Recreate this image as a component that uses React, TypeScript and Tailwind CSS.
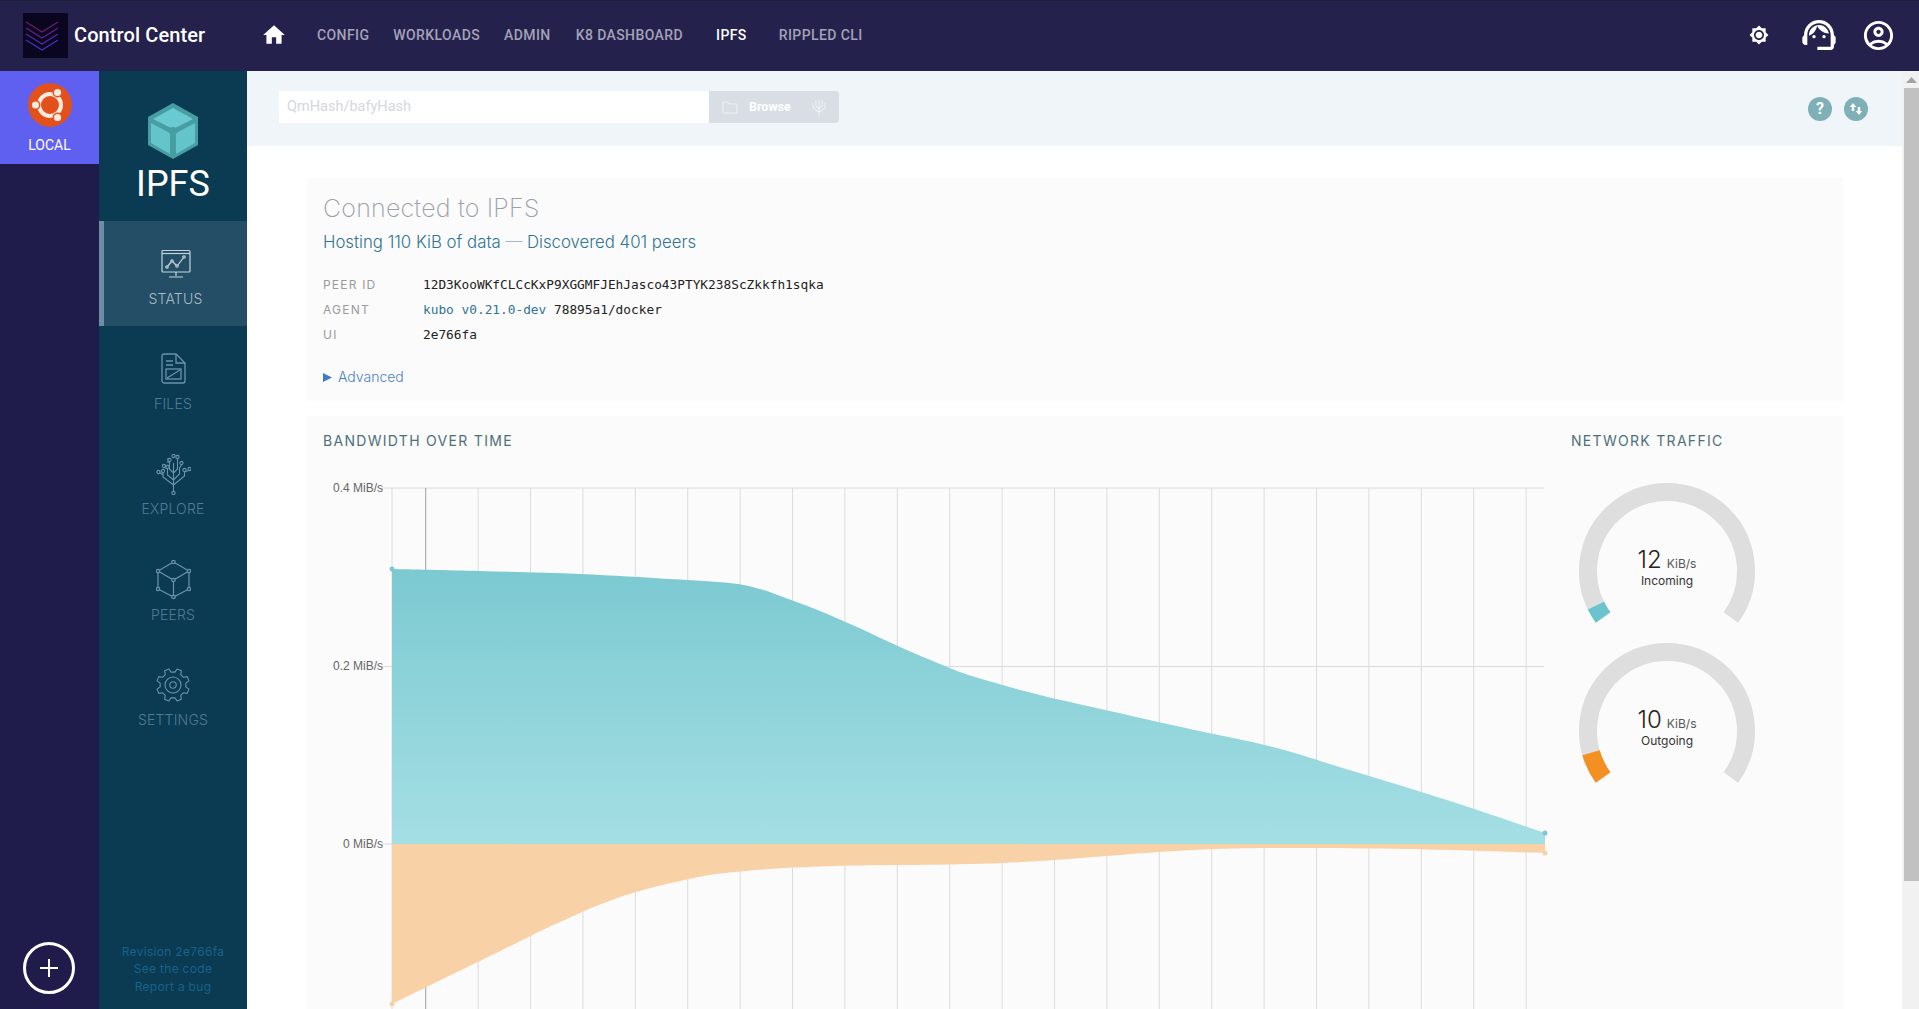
import React from "react";
import { MdHome, MdBrightnessHigh, MdOutlineSupportAgent, MdOutlineAccountCircle } from "react-icons/md";

type Pt = [number, number];

const topLine: Pt[] = [
  [392, 569], [480, 571], [580, 574], [670, 579], [730, 583], [760, 589], [783, 597], [820, 611], [857, 627],
  [900, 647], [940, 664], [975, 677], [1040, 695], [1101, 709], [1190, 729], [1273, 747], [1346, 769], [1450, 801], [1545, 833],
];
const bottomLine: Pt[] = [
  [392, 1004], [490, 956], [560, 922], [620, 897], [680, 881], [734, 872], [832, 866], [1004, 863],
  [1175, 851], [1273, 848], [1407, 849], [1545, 853],
];

// catmull-rom through the samples, same look as the chart's tension curve
const curve = (pts: Pt[]) => {
  let d = `L${pts[0][0]} ${pts[0][1]}`;
  for (let i = 0; i < pts.length - 1; i++) {
    const p0 = pts[Math.max(i - 1, 0)];
    const p1 = pts[i];
    const p2 = pts[i + 1];
    const p3 = pts[Math.min(i + 2, pts.length - 1)];
    const c1x = p1[0] + (p2[0] - p0[0]) / 6;
    const c1y = p1[1] + (p2[1] - p0[1]) / 6;
    const c2x = p2[0] - (p3[0] - p1[0]) / 6;
    const c2y = p2[1] - (p3[1] - p1[1]) / 6;
    d += ` C${c1x} ${c1y} ${c2x} ${c2y} ${p2[0]} ${p2[1]}`;
  }
  return d;
};

const gridX = Array.from({ length: 22 }, (_, i) => 425.7 + i * 52.4);

// angle is measured from straight down, clockwise positive goes to the left side
const polar = (cx: number, cy: number, r: number, deg: number): Pt => {
  const a = (deg * Math.PI) / 180;
  return [cx - r * Math.sin(a), cy + r * Math.cos(a)];
};

const arc = (cx: number, cy: number, r: number, from: number, to: number) => {
  const [x1, y1] = polar(cx, cy, r, from);
  const [x2, y2] = polar(cx, cy, r, to);
  const large = to - from > 180 ? 1 : 0;
  return `M${x1} ${y1} A${r} ${r} 0 ${large} 1 ${x2} ${y2}`;
};

const gearPath = () => {
  const pts: string[] = [];
  for (let i = 0; i < 8; i++) {
    const base = i * 45 + 22.5;
    [[-14, 13], [-8, 16.5], [8, 16.5], [14, 13]].forEach(([off, r]) => {
      const [x, y] = polar(18, 18, r, base + off);
      pts.push(`${x.toFixed(2)},${y.toFixed(2)}`);
    });
  }
  return pts.join(" ");
};

const Gauge = ({ value, label, color, span }: { value: string; label: string; color: string; span: number }) => (
  <svg width="192" height="160" viewBox="0 0 192 160" className="block">
    <path d={arc(96, 88, 79, 54, 306)} fill="none" stroke="#dedede" strokeWidth="18" />
    <path d={arc(96, 88, 79, 54, 54 + span)} fill="none" stroke={color} strokeWidth="18" />
    <text x="96" y="85" textAnchor="middle" fill="#222" fontFamily="Inter, sans-serif">
      <tspan fontSize="24" fontWeight="300">{value}</tspan>
      <tspan fontSize="12" dx="5" fill="#555">KiB/s</tspan>
    </text>
    <text x="96" y="102" textAnchor="middle" fontSize="12" fill="#333" fontFamily="Inter, sans-serif">
      {label}
    </text>
  </svg>
);

const StatusIcon = () => (
  <svg width="30" height="30" viewBox="0 0 30 30" fill="none" stroke="#c4d4de" strokeWidth="1.2">
    <rect x="1" y="1.5" width="28" height="21.5" rx="1" />
    <path d="M1 4.5h28" />
    <path d="M6 18l5-6 5 5 7-9" />
    <circle cx="6" cy="18" r="1.2" fill="#244e66" />
    <circle cx="11" cy="12" r="1.2" fill="#244e66" />
    <circle cx="16" cy="17" r="1.2" fill="#244e66" />
    <circle cx="23" cy="8" r="1.2" fill="#244e66" />
    <path d="M15 23v4M8 28h14" />
  </svg>
);

const FilesIcon = () => (
  <svg width="25" height="31" viewBox="0 0 25 31" fill="none" stroke="#6d94a9" strokeWidth="1.3">
    <path d="M3 1h12l9 9v18a2 2 0 0 1-2 2H3a2 2 0 0 1-2-2V3a2 2 0 0 1 2-2z" />
    <path d="M15 1v9h9M5 8h7M5 12h7" />
    <rect x="5" y="16" width="15" height="10" />
    <path d="M6 25l13-8" />
  </svg>
);

const ExploreIcon = () => (
  <svg width="35" height="41" viewBox="0 0 35 41" fill="none" stroke="#6d94a9" strokeWidth="1.1">
    <path d="M17.5 37V9M17.5 31L7 23V19M17.5 31l11-9v-4l5-2M17.5 26l-6-5v-6l-3-2M17.5 26l6-6v-6l2-3M17.5 19l-4-4V8M17.5 19l4-4V5M3 18l4 3M12 4v5" />
    {[[17.5, 39], [2.5, 18], [7, 17], [8, 12], [11.5, 13], [13.5, 6], [17.5, 2], [21.5, 3], [25.5, 9], [28.5, 16], [33.5, 15]].map(([x, y]) => (
      <circle key={`${x}-${y}`} cx={x} cy={y} r="1.6" fill="#0b3a53" />
    ))}
  </svg>
);

const PeersIcon = () => (
  <svg width="35" height="39" viewBox="0 0 35 39" fill="none" stroke="#6d94a9" strokeWidth="1.2">
    <path d="M17.5 2L33 11v18l-15.5 8L2 29V11zM2 11l15.5 9L33 11M17.5 20v17" />
    {[[17.5, 2], [33, 11], [33, 29], [17.5, 37], [2, 29], [2, 11], [17.5, 20]].map(([x, y]) => (
      <circle key={`${x}-${y}`} cx={x} cy={y} r="1.7" fill="#0b3a53" />
    ))}
  </svg>
);

const SettingsIcon = () => (
  <svg width="36" height="36" viewBox="0 0 36 36" fill="none" stroke="#6d94a9" strokeWidth="1.1" strokeLinejoin="round">
    <polygon points={gearPath()} />
    <circle cx="18" cy="18" r="8" />
    <circle cx="18" cy="18" r="3.2" />
  </svg>
);

const navItems = [
  { label: "FILES", icon: <FilesIcon /> },
  { label: "EXPLORE", icon: <ExploreIcon /> },
  { label: "PEERS", icon: <PeersIcon /> },
  { label: "SETTINGS", icon: <SettingsIcon /> },
];

const App = () => {
  return (
    <div className="h-[1009px] w-full overflow-hidden flex flex-col bg-white font-['Roboto',sans-serif]">
      <header className="h-[71px] shrink-0 bg-[#25214d] border-t border-t-[#1d2033] flex items-center pb-[2px]">
        <div className="w-[45px] h-[45px] ml-[23px] bg-[#0a0620]">
          <svg width="45" height="45" viewBox="0 0 45 45" fill="none" strokeWidth="1.3">
            <path d="M3 9l16 10 16-10" stroke="#6d1d6b" />
            <path d="M3 15l16 10 16-10" stroke="#6a2090" />
            <path d="M3 21l16 10 16-10" stroke="#5a28ac" />
            <path d="M3 27l16 10 16-10" stroke="#4a30c4" />
          </svg>
        </div>
        <div className="ml-[6px] text-white text-[20px] font-medium w-[131px] whitespace-nowrap tracking-[0.1px]">Control Center</div>
        <MdHome className="ml-[56px] text-white" size={26} />
        <nav className="ml-[30px] flex items-center text-[14px] font-medium tracking-[0.4px] text-[#a3a2b8]">
          <span>CONFIG</span>
          <span className="ml-[24px]">WORKLOADS</span>
          <span className="ml-[24px]">ADMIN</span>
          <span className="ml-[25px]">K8 DASHBOARD</span>
          <span className="ml-[33px] text-white">IPFS</span>
          <span className="ml-[32px]">RIPPLED CLI</span>
        </nav>
        <div className="ml-auto flex items-center text-white">
          <MdBrightnessHigh size={20} />
          <MdOutlineSupportAgent className="ml-[30px]" size={40} />
          <MdOutlineAccountCircle className="ml-[22px] mr-[23px]" size={35} />
        </div>
      </header>

      <div className="flex-1 flex min-h-0">
        <aside className="w-[99px] shrink-0 bg-[#1f1b4b] flex flex-col items-stretch">
          <div className="h-[93px] bg-[#6060f0] flex flex-col items-center pt-[12px]">
            <svg width="44" height="44" viewBox="0 0 44 44">
              <circle cx="22" cy="22" r="22" fill="#e2501c" />
              <circle cx="22" cy="22" r="11" fill="none" stroke="#fbeadf" strokeWidth="4" />
              <circle cx="7.5" cy="22" r="5" fill="#e2501c" />
              <circle cx="29.5" cy="9.5" r="5" fill="#e2501c" />
              <circle cx="29.5" cy="34.5" r="5" fill="#e2501c" />
              <circle cx="7.5" cy="22" r="3.6" fill="#fbeadf" />
              <circle cx="29.5" cy="9.5" r="3.6" fill="#fbeadf" />
              <circle cx="29.5" cy="34.5" r="3.6" fill="#fbeadf" />
            </svg>
            <div className="mt-[8px] text-white text-[14px] leading-[20px]">LOCAL</div>
          </div>
          <div className="mt-auto mb-[15px] flex justify-center">
            <div className="w-[52px] h-[52px] -ml-[1px] rounded-full border-[3px] border-white flex items-center justify-center">
              <svg width="18" height="18" viewBox="0 0 18 18" stroke="white" strokeWidth="2">
                <path d="M9 0v18M0 9h18" />
              </svg>
            </div>
          </div>
        </aside>

        <aside className="w-[148px] shrink-0 bg-[#0b3a53] flex flex-col font-['Inter',sans-serif]">
          <div className="h-[150px] flex flex-col items-center pt-[32px]">
            <svg width="50" height="56" viewBox="0 0 50 56">
              <path d="M25 0L50 14v28L25 56 0 42V14z" fill="#469ea2" />
              <path d="M25 5L45 16 25 26 5 16z" fill="#6acad1" />
              <path d="M3 20l19 10v21L3 40zM47 20L28 30v21l19-11z" fill="#6acad1" opacity="0.85" />
              <circle cx="25" cy="28" r="4" fill="#469ea2" />
            </svg>
            <div className="mt-[4px] text-white text-[36px] leading-[42px] font-['Roboto',sans-serif]">IPFS</div>
          </div>
          <div className="h-[105px] bg-[#244e66] border-l-[5px] border-l-[#6c8ea5] flex flex-col items-center pt-[28px]">
            <StatusIcon />
            <div className="mt-[10px] text-[14px] leading-[20px] font-light text-[#a9bdc9] tracking-[0.2px]">STATUS</div>
          </div>
          {navItems.map((item) => (
            <div key={item.label} className="h-[105.5px] flex flex-col items-center justify-end pb-[18px]">
              <div className="h-[42px] flex items-center justify-center">{item.icon}</div>
              <div className="mt-[4px] text-[14px] leading-[20px] font-light text-[#4f7c93] tracking-[0.2px]">{item.label}</div>
            </div>
          ))}
          <div className="mt-auto pb-[14px] text-center text-[12px] leading-[17.5px] tracking-[0.3px] text-[#17628a]">
            <div>Revision 2e766fa</div>
            <div>See the code</div>
            <div>Report a bug</div>
          </div>
        </aside>

        <main className="flex-1 min-w-0 overflow-hidden">
          <div className="h-[75px] bg-[#f0f5fa] flex items-center pl-[32px] pr-[34px] pb-[3px]">
            <div className="w-[430px] h-[32px] bg-white flex items-center pl-[8px] text-[14.5px] text-[#d5d8dc]">QmHash/bafyHash</div>
            <div className="w-[130px] h-[32px] bg-[#d9dde4] rounded-r-sm flex items-center pl-[13px] text-white text-[12.5px] font-bold">
              <svg width="16" height="16" viewBox="0 0 16 16" fill="none" stroke="#eef0f4" strokeWidth="1">
                <path d="M1 3h5l1 2h8v9H1z" />
              </svg>
              <span className="ml-[11px] w-[44px]">Browse</span>
              <svg className="ml-[17px]" width="18" height="22" viewBox="0 0 35 41" fill="none" stroke="#eef0f4" strokeWidth="2">
                <path d="M17.5 38V6M17.5 31L6 22V12M17.5 31L29 22V12M17.5 24l-6-6V7M17.5 24l6-6V7" />
              </svg>
            </div>
            <div className="ml-auto mt-[4px] flex items-center">
              <div className="w-[24px] h-[24px] rounded-full bg-[#7fb0b8] flex items-center justify-center text-white text-[16px] font-bold leading-none">?</div>
              <div className="ml-[12px] w-[24px] h-[24px] rounded-full bg-[#7fb0b8] flex items-center justify-center">
                <svg width="14" height="14" viewBox="0 0 14 14" fill="white">
                  <path d="M4 1l3.2 4H5.2v4H2.8V5H.8zM10 13l3.2-4h-2V5H8.8v4h-2z" />
                </svg>
              </div>
            </div>
          </div>

          <div className="pt-[32px] pl-[60px] pr-[59px]">
            <section className="h-[223px] bg-[#fbfbfb] pl-[16px] pt-[15px]">
              <h1 className="text-[25px] leading-[30px] tracking-[0.2px] font-extralight text-[#9a9fa8] font-['Inter',sans-serif]">Connected to IPFS</h1>
              <div className="mt-[7px] text-[16.8px] leading-[24px] font-light text-[#2f7494] font-['Inter',sans-serif]">
                Hosting 110 KiB of data <span className="text-[#9fb8c4]">—</span> Discovered 401 peers
              </div>
              <div className="mt-[18px] text-[12.8px] leading-[25px] font-['DejaVu_Sans_Mono',monospace] text-[#222]">
                <div className="flex">
                  <span className="w-[100px] text-[12px] tracking-[1.2px] text-[#9a9a9a] font-['Inter',sans-serif]">PEER ID</span>
                  <span>12D3KooWKfCLCcKxP9XGGMFJEhJasco43PTYK238ScZkkfh1sqka</span>
                </div>
                <div className="flex">
                  <span className="w-[100px] text-[12px] tracking-[1.2px] text-[#9a9a9a] font-['Inter',sans-serif]">AGENT</span>
                  <span><span className="text-[#2f7494]">kubo v0.21.0-dev</span> 78895a1/docker</span>
                </div>
                <div className="flex">
                  <span className="w-[100px] text-[12px] tracking-[1.2px] text-[#9a9a9a] font-['Inter',sans-serif]">UI</span>
                  <span>2e766fa</span>
                </div>
              </div>
              <div className="mt-[20px] flex items-center text-[14px] leading-[20px] text-[#4a7fbf] font-['Inter',sans-serif] font-light">
                <svg width="9" height="9" viewBox="0 0 9 9" fill="#3f7cc4"><path d="M0 0l9 4.5L0 9z" /></svg>
                <span className="ml-[6px]">Advanced</span>
              </div>
            </section>

            <section className="mt-[15px] h-[694px] bg-[#fbfbfb] pl-[16px] pt-[16px] flex">
              <div className="w-[1248px] shrink-0">
                <h2 className="text-[14px] leading-[18px] tracking-[1.3px] text-[#4d7078] font-['Inter',sans-serif]">BANDWIDTH OVER TIME</h2>
                <svg className="mt-[20px] block" width="1248" height="600" viewBox="323 470 1248 600">
                  <defs>
                    <linearGradient id="teal" x1="0" y1="0" x2="0" y2="1">
                      <stop offset="0" stopColor="#7cc9d1" />
                      <stop offset="1" stopColor="#a4dfe4" />
                    </linearGradient>
                  </defs>
                  <g stroke="#dcdcdc" strokeWidth="1">
                    {[488, 666.5, 844, 1022].map((y) => (
                      <path key={y} d={`M382 ${y}H1544`} />
                    ))}
                    <path d="M392 488V1070" />
                    {gridX.map((x) => (
                      <path key={x} d={`M${x} 488V1070`} />
                    ))}
                    <path d="M425.7 488V1070" stroke="#a8a8a8" />
                  </g>
                  <g fontSize="12" fill="#666" textAnchor="end" fontFamily="'Liberation Sans', sans-serif">
                    <text x="383" y="492">0.4 MiB/s</text>
                    <text x="383" y="670">0.2 MiB/s</text>
                    <text x="383" y="848">0 MiB/s</text>
                  </g>
                  <path d={`M392 844 ${curve(topLine)} L1545 844Z`} fill="url(#teal)" />
                  <path d={`M392 844 ${curve(bottomLine)} L1545 844Z`} fill="#f9d1a6" />
                  <circle cx="392" cy="569" r="2.5" fill="#7cc9d1" />
                  <circle cx="1545" cy="833" r="2.5" fill="#7cc9d1" />
                  <circle cx="392" cy="1004" r="2.5" fill="#f9d1a6" />
                  <circle cx="1545" cy="853" r="2.5" fill="#f9d1a6" />
                </svg>
              </div>
              <div>
                <h2 className="text-[14px] leading-[18px] tracking-[1.3px] text-[#4d7078] font-['Inter',sans-serif]">NETWORK TRAFFIC</h2>
                <div className="mt-[33px]">
                  <Gauge value="12" label="Incoming" color="#69c4cd" span={10} />
                  <Gauge value="10" label="Outgoing" color="#f39021" span={20} />
                </div>
              </div>
            </section>
          </div>
        </main>

        <div className="w-[17px] shrink-0 bg-[#f1f1f1] flex flex-col items-end">
          <svg className="mt-[6px] mr-[2px]" width="11" height="6" viewBox="0 0 11 6" fill="#a3a3a3"><path d="M5.5 0l5.5 6H0z" /></svg>
          <div className="mt-[5px] w-[15px] h-[793px] bg-[#c1c1c1]" />
        </div>
      </div>
    </div>
  );
};

export default App;
